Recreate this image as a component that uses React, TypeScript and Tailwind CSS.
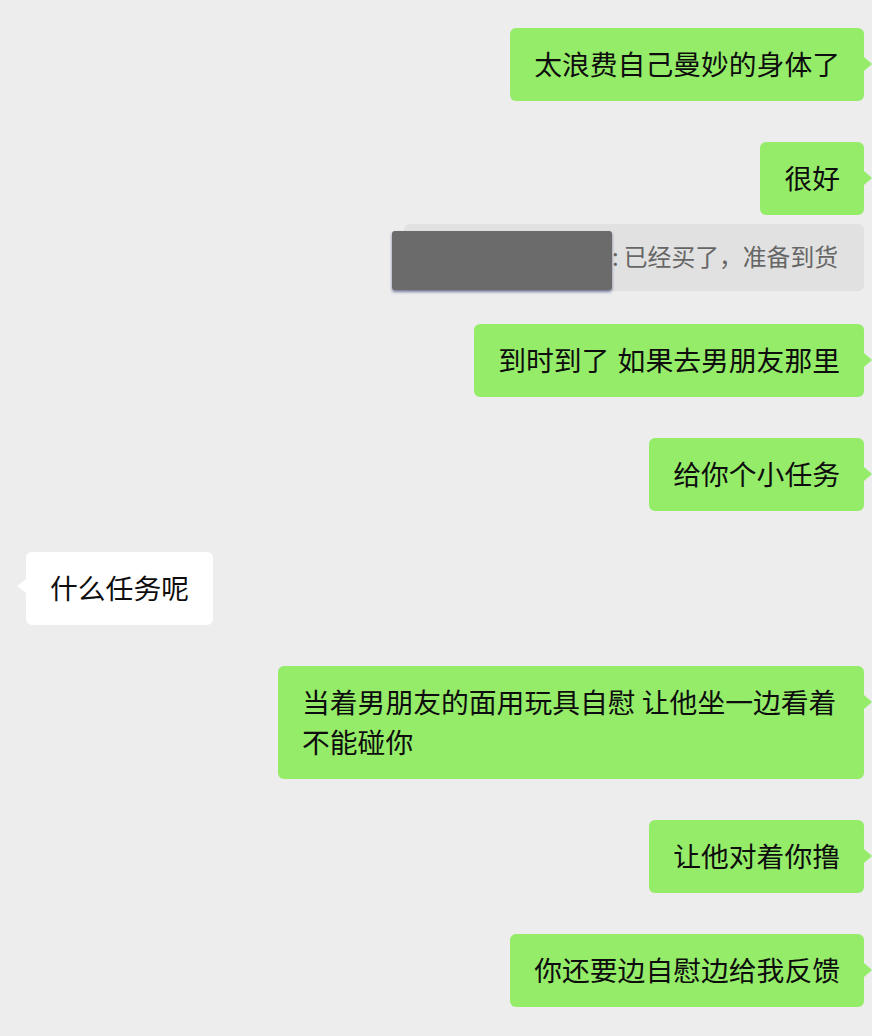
import React from "react";

const font = { fontFamily: '"Noto Sans CJK SC", "Noto Sans", sans-serif' };

function Right({ children, className = "" }: { children: React.ReactNode; className?: string }) {
  return (
    <div className={"flex justify-end pr-[8px] pl-[278px] " + className}>
      <div className="relative rounded-[6px] bg-[#95ec69] px-[24px] pt-[14.5px] pb-[18.5px] text-[27.8px] leading-[40px] text-[#0d0d0d]">
        {children}
        <span className="absolute right-[-8px] top-[29px] h-0 w-0 border-y-[7px] border-l-[8px] border-y-transparent border-l-[#95ec69]" />
      </div>
    </div>
  );
}

function Left({ children, className = "" }: { children: React.ReactNode; className?: string }) {
  return (
    <div className={"flex justify-start pl-[26px] " + className}>
      <div className="relative rounded-[6px] bg-white px-[24px] pt-[14.5px] pb-[18.5px] text-[27.8px] leading-[40px] text-[#0d0d0d]">
        {children}
        <span className="absolute left-[-9px] top-[27px] h-0 w-0 border-y-[7px] border-r-[9px] border-y-transparent border-r-white" />
      </div>
    </div>
  );
}

export default function App() {
  return (
    <div className="h-[1036px] w-[872px] overflow-hidden bg-[#ededed] pt-[28px]" style={font}>
      <Right>太浪费自己曼妙的身体了</Right>
      <Right className="mt-[41px]">很好</Right>
      <div className="mt-[9px] flex justify-end pr-[8px]">
        <div className="relative flex h-[67px] items-center rounded-[6px] bg-[#e1e1e1] pb-[4px] pl-[208px] pr-[26px] text-[23.8px] text-[#666666]">
          <span>: 已经买了，准备到货</span>
          <div className="absolute left-[-12px] top-[7px] h-[59px] w-[220px] rounded-[3px] bg-[#6b6b6b] shadow-[0_2px_3px_rgba(40,50,110,0.6)]" />
        </div>
      </div>
      <Right className="mt-[33px]">
        到时到了 <span className="ml-[2px]">如果去男朋友那里</span>
      </Right>
      <Right className="mt-[41px]">给你个小任务</Right>
      <Left className="mt-[41px]">什么任务呢</Left>
      <Right className="mt-[41px]">当着男朋友的面用玩具自慰 让他坐一边看着不能碰你</Right>
      <Right className="mt-[41px]">让他对着你撸</Right>
      <Right className="mt-[41px]">你还要边自慰边给我反馈</Right>
    </div>
  );
}
